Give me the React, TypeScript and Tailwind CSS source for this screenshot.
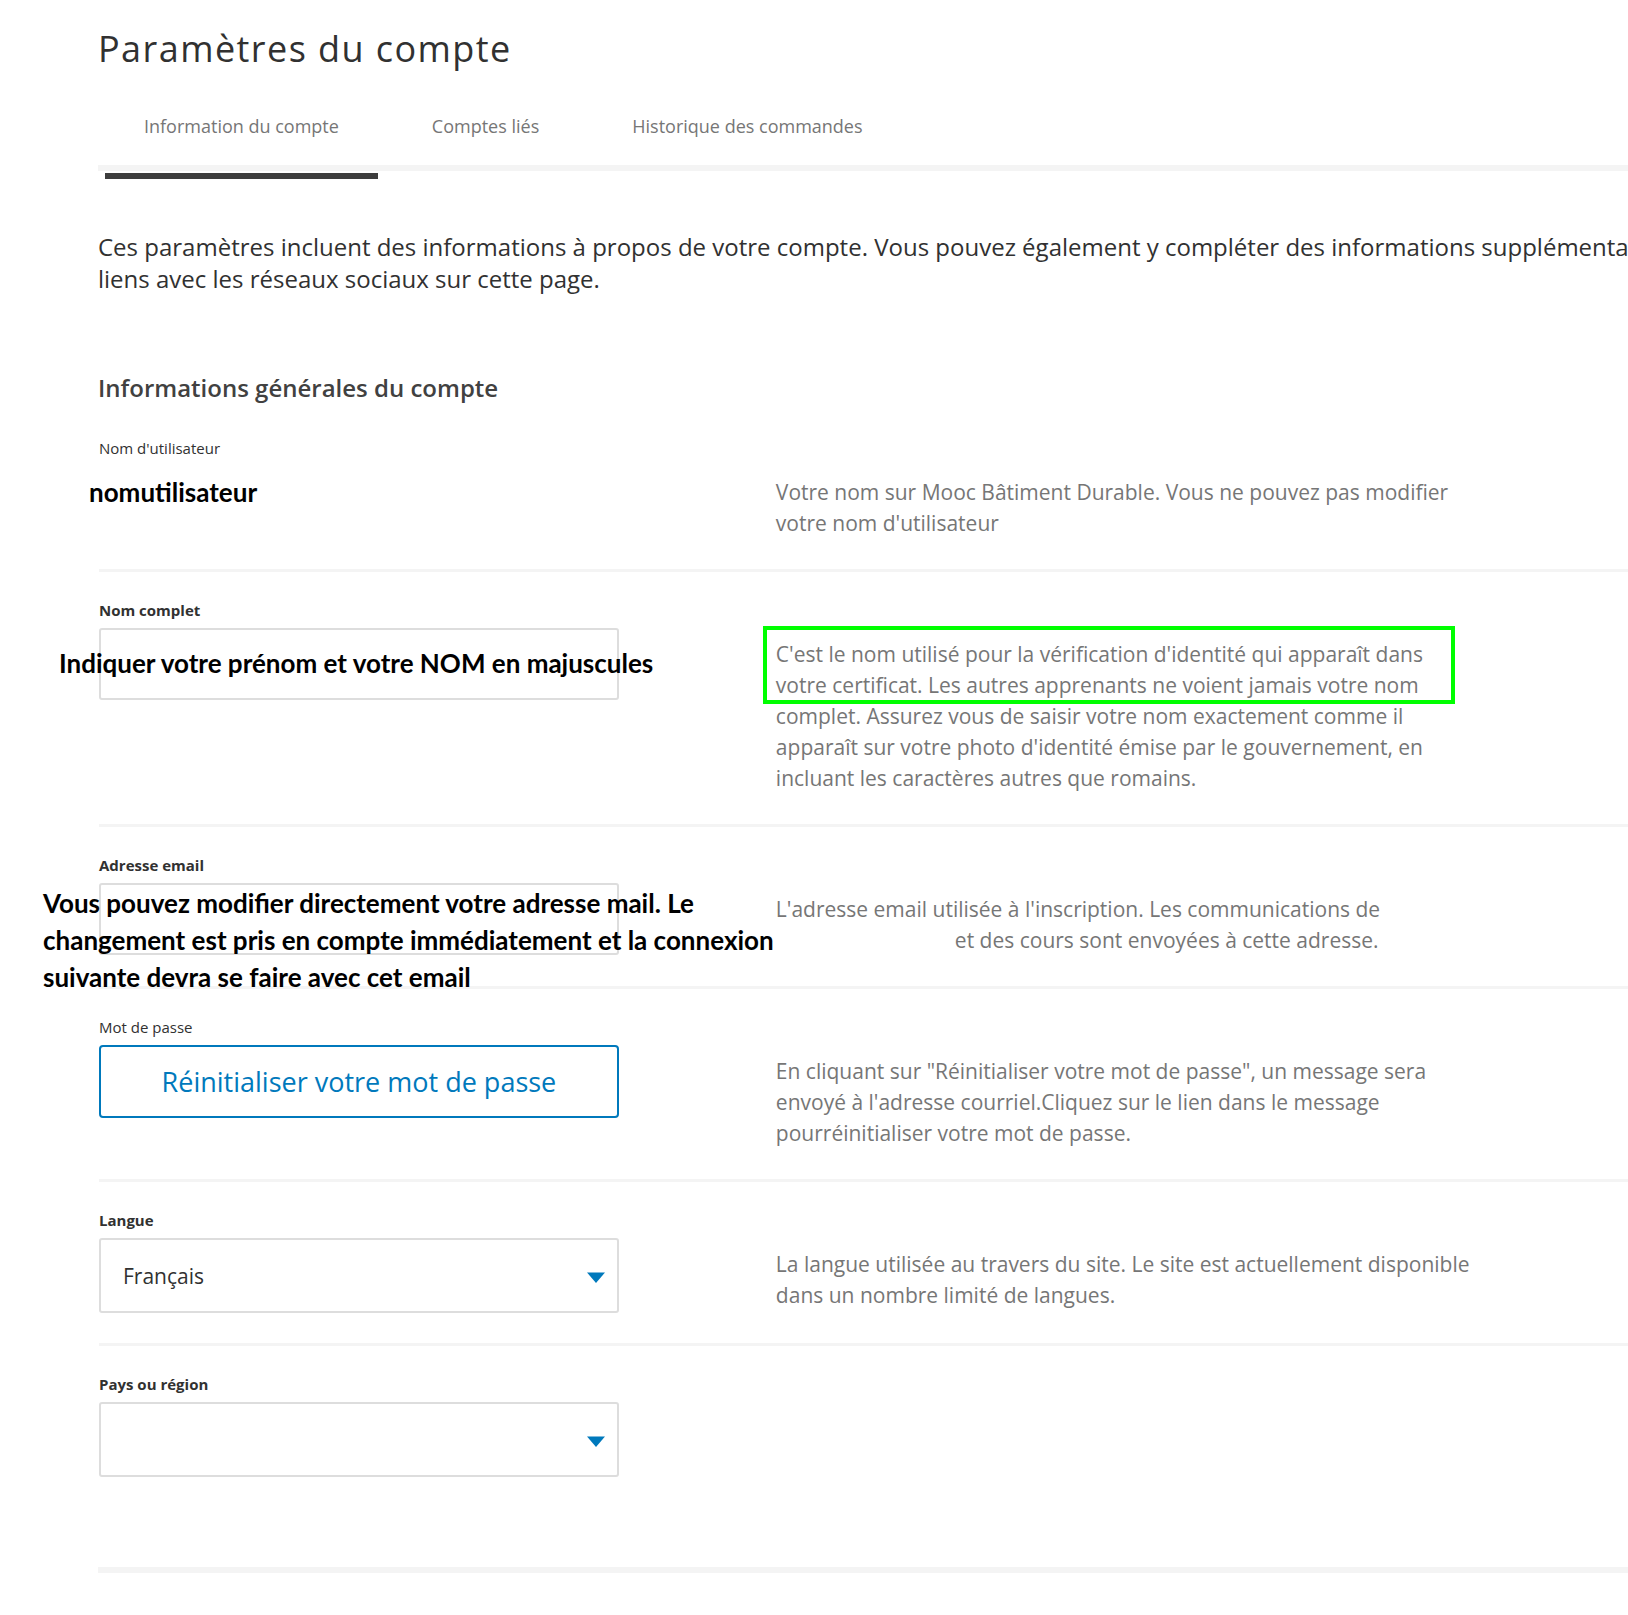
import React from 'react';
import clsx from 'clsx';

const tabs = ['Information du compte', 'Comptes liés', 'Historique des commandes'];

const languages = ['Français', 'English'];

interface RowProps {
  id?: string;
  label: string;
  strong?: boolean;
  help?: React.ReactNode;
  last?: boolean;
}

const SettingRow: React.FC<React.PropsWithChildren<RowProps>> = ({ id, label, strong, help, last, children }) => {
  const labelClass = clsx('mb-2 block text-[15px] leading-5 text-[#313131]', strong && 'font-bold');

  return (
    <div className={clsx('ml-px flex pt-7 pb-[30px]', !last && 'border-b-[3px] border-[#f4f4f4]')}>
      <div className="relative w-[34%] shrink-0">
        {id ? (
          <label htmlFor={id} className={labelClass}>{label}</label>
        ) : (
          <span className={labelClass}>{label}</span>
        )}
        {children}
      </div>
      {help && (
        <p className="mt-[39px] ml-[157px] text-[21px] leading-[31px] whitespace-nowrap text-[#767676]">{help}</p>
      )}
    </div>
  );
};

// Remark laid over the form
const Note: React.FC<React.PropsWithChildren<{ className?: string }>> = ({ className, children }) => (
  <p
    className={clsx(
      'pointer-events-none absolute font-[Lato,sans-serif] text-[26px] leading-[37px] font-bold whitespace-nowrap text-black',
      className,
    )}
  >
    {children}
  </p>
);

const SelectField: React.FC<{ id: string; options: string[] }> = ({ id, options }) => (
  <div className="relative">
    <select
      id={id}
      className="block h-[75px] w-full appearance-none rounded-[3px] border-2 border-[#ddd] bg-white px-[22px] pt-0.5 text-[21px] text-[#313131]"
    >
      {options.map((option) => (
        <option key={option}>{option}</option>
      ))}
    </select>
    <svg className="pointer-events-none absolute top-[34px] right-[14px]" width="18" height="11" viewBox="0 0 18 11">
      <path d="M0 0.5h18L9 11z" fill="#0079bc" />
    </svg>
  </div>
);

export default function App() {
  return (
    <main className="min-h-screen overflow-hidden bg-white pl-[98px] font-['Open_Sans',sans-serif] text-[#313131]">
      <h1 className="pt-6 text-[36px] leading-[50px] tracking-[0.04em]">Paramètres du compte</h1>

      <nav className="mt-[22px] border-b-[6px] border-[#f4f4f4] pl-[7px]">
        <div className="-mb-[14px] flex gap-[15px]">
          {tabs.map((tab, i) => (
            <button
              key={tab}
              type="button"
              className={clsx(
                'h-[83px] border-b-[6px] px-[39px] pb-[17px] text-[18px] text-[#767676]',
                i === 0 ? 'border-[#3d3d3d]' : 'border-transparent',
              )}
            >
              {tab}
            </button>
          ))}
        </div>
      </nav>

      <p className="mt-[60px] text-[24px] leading-8 whitespace-nowrap">
        Ces paramètres incluent des informations à propos de votre compte. Vous pouvez également y compléter des informations supplémentaires
        <br />
        liens avec les réseaux sociaux sur cette page.
      </p>

      <section className="border-b-[6px] border-[#f4f4f4] pb-[60px]">
        <h2 className="mt-[77px] mb-1.5 text-[24px] leading-8 font-semibold text-[#414141]">
          Informations générales du compte
        </h2>

        <SettingRow
          label="Nom d'utilisateur"
          help={
            <>
              Votre nom sur Mooc Bâtiment Durable. Vous ne pouvez pas modifier
              <br />
              votre nom d'utilisateur
            </>
          }
        >
          <Note className="top-9 -left-2.5">nomutilisateur</Note>
        </SettingRow>

        <SettingRow
          id="fullname"
          label="Nom complet"
          strong
          help={
            <span className="relative">
              <span className="pointer-events-none absolute -top-[14px] -left-[13px] h-[78px] w-[692px] border-4 border-[#0f0]" />
              C'est le nom utilisé pour la vérification d'identité qui apparaît dans
              <br />
              votre certificat. Les autres apprenants ne voient jamais votre nom
              <br />
              complet. Assurez vous de saisir votre nom exactement comme il
              <br />
              apparaît sur votre photo d'identité émise par le gouvernement, en
              <br />
              incluant les caractères autres que romains.
            </span>
          }
        >
          <input id="fullname" type="text" className="block h-18 w-full rounded-[3px] border-2 border-[#ddd] bg-white px-[22px] text-[21px]" />
          <Note className="top-[45px] -left-10">Indiquer votre prénom et votre NOM en majuscules</Note>
        </SettingRow>

        <SettingRow
          id="email"
          label="Adresse email"
          strong
          help={
            <>
              L'adresse email utilisée à l'inscription. Les communications de
              <br />
              <span className="pl-[179px]">et des cours sont envoyées à cette adresse.</span>
            </>
          }
        >
          <input id="email" type="email" className="-mb-px block h-18 w-full rounded-[3px] border-2 border-[#ddd] bg-white px-[22px] text-[21px]" />
          <Note className="top-[30px] -left-14">
            Vous pouvez modifier directement votre adresse mail. Le
            <br />
            changement est pris en compte immédiatement et la connexion
            <br />
            suivante devra se faire avec cet email
          </Note>
        </SettingRow>

        <SettingRow
          label="Mot de passe"
          help={
            <>
              En cliquant sur "Réinitialiser votre mot de passe", un message sera
              <br />
              envoyé à l'adresse courriel.Cliquez sur le lien dans le message
              <br />
              pourréinitialiser votre mot de passe.
            </>
          }
        >
          <button type="button" className="block h-[73px] w-full rounded-[4px] border-2 border-[#0079bc] pt-0.5 text-[27px] text-[#0079bc]">
            Réinitialiser votre mot de passe
          </button>
        </SettingRow>

        <SettingRow
          id="language"
          label="Langue"
          strong
          help={
            <>
              La langue utilisée au travers du site. Le site est actuellement disponible
              <br />
              dans un nombre limité de langues.
            </>
          }
        >
          <SelectField id="language" options={languages} />
        </SettingRow>

        <SettingRow id="country" label="Pays ou région" strong last>
          <SelectField id="country" options={['', 'France']} />
        </SettingRow>
      </section>
    </main>
  );
}
